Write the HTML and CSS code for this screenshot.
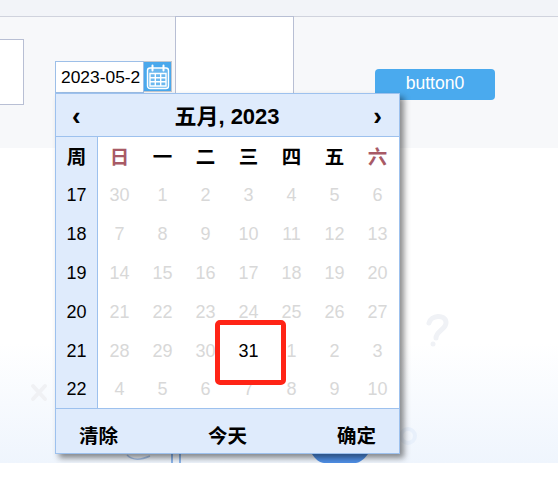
FILE: index.html
```html
<!DOCTYPE html>
<html lang="zh-CN">
<head>
  <meta charset="UTF-8" />
  <meta name="viewport" content="width=device-width, initial-scale=1" />
  <title>日期选择</title>
  <link rel="stylesheet" href="styles.css">
</head>
<body>
  <div class="pagina">
    <div class="barra"></div>
    <div class="panel">
      <div class="caja-izq"></div>
      <div class="fecha">
        <div class="fecha-texto">2023-05-2</div>
        <div class="fecha-icono">
          <svg width="24" height="26" viewBox="0 0 24 26" fill="none" stroke="#fff" stroke-width="1.4">
            <rect x="1.5" y="4" width="21" height="20.5" rx="2.5" fill="#a9d6f7" fill-opacity="0.35" />
            <path d="M6.5 1.5v5M17.5 1.5v5" stroke-width="2" stroke-linecap="round" />
            <path d="M4 9.5h16v12.5h-16zM9.3 9.5v12.5M14.7 9.5v12.5M4 13.7h16M4 17.8h16" />
          </svg>
        </div>
      </div>
      <div class="caja-centro"></div>
      <div class="boton">button0</div>
    </div>

    <div class="fondo">
      <svg class="dibujo" width="558" height="315" viewBox="0 148 558 315" fill="none">
        <path d="M33 386l12 13M45 386l-12 13" stroke="#f0f1f4" stroke-width="4" stroke-linecap="round" />
        <path d="M429 323c2-8 16-9 17-1 1 7-10 9-10 16" stroke="#f0f2f6" stroke-width="5" stroke-linecap="round" />
        <circle cx="433" cy="344" r="2.5" fill="#f0f2f6" />
        <circle cx="408" cy="436" r="7" stroke="#e8f0fb" stroke-width="4" />
        <path d="M127 455c6 6 14 5 23 1" stroke="#a9c4ec" stroke-width="1.5" />
        <path d="M172 452v11M180 452v11" stroke="#8db5ea" stroke-width="2" />
        <path d="M312 454h56c-4 6-10 9-12 9h-32c-4 0-9-4-12-9z" fill="#4f8fe6" />
      </svg>
    </div>

    <div class="calendario">
      <div class="cal-cabecera">
        <span class="flecha">‹</span>
        <span>五月, 2023</span>
        <span class="flecha">›</span>
      </div>
      <div class="cal-cuerpo">
        <div class="semanas">
          <div class="celda negrita">周</div>
          <div class="celda">17</div>
          <div class="celda">18</div>
          <div class="celda">19</div>
          <div class="celda">20</div>
          <div class="celda">21</div>
          <div class="celda">22</div>
        </div>
        <div class="dias">
          <div class="celda negrita finde">日</div>
          <div class="celda negrita">一</div>
          <div class="celda negrita">二</div>
          <div class="celda negrita">三</div>
          <div class="celda negrita">四</div>
          <div class="celda negrita">五</div>
          <div class="celda negrita finde">六</div>

          <div class="celda gris">30</div>
          <div class="celda gris">1</div>
          <div class="celda gris">2</div>
          <div class="celda gris">3</div>
          <div class="celda gris">4</div>
          <div class="celda gris">5</div>
          <div class="celda gris">6</div>

          <div class="celda gris">7</div>
          <div class="celda gris">8</div>
          <div class="celda gris">9</div>
          <div class="celda gris">10</div>
          <div class="celda gris">11</div>
          <div class="celda gris">12</div>
          <div class="celda gris">13</div>

          <div class="celda gris">14</div>
          <div class="celda gris">15</div>
          <div class="celda gris">16</div>
          <div class="celda gris">17</div>
          <div class="celda gris">18</div>
          <div class="celda gris">19</div>
          <div class="celda gris">20</div>

          <div class="celda gris">21</div>
          <div class="celda gris">22</div>
          <div class="celda gris">23</div>
          <div class="celda gris">24</div>
          <div class="celda gris">25</div>
          <div class="celda gris">26</div>
          <div class="celda gris">27</div>

          <div class="celda gris">28</div>
          <div class="celda gris">29</div>
          <div class="celda gris">30</div>
          <div class="celda marcada">31</div>
          <div class="celda gris">1</div>
          <div class="celda gris">2</div>
          <div class="celda gris">3</div>

          <div class="celda gris">4</div>
          <div class="celda gris">5</div>
          <div class="celda gris">6</div>
          <div class="celda gris">7</div>
          <div class="celda gris">8</div>
          <div class="celda gris">9</div>
          <div class="celda gris">10</div>
        </div>
      </div>
      <div class="cal-pie">
        <span>清除</span>
        <span>今天</span>
        <span>确定</span>
      </div>
    </div>
  </div>
</body>
</html>
```

FILE: styles.css
```css
* {
  margin: 0;
  padding: 0;
  box-sizing: border-box;
}
body {
  background: #fff;
  font-family: "Liberation Sans", "Noto Sans CJK SC", sans-serif;
  overflow: hidden;
}
.pagina {
  position: relative;
  width: 558px;
  height: 463px;
  overflow: hidden;
  display: flex;
  flex-direction: column;
}
.barra {
  height: 17px;
  flex: none;
  background: #f2f4f8;
  border-bottom: 1px solid #d0d3dd;
}
.panel {
  height: 131px;
  flex: none;
  display: flex;
  align-items: flex-start;
  background: #f7f8fa;
}
.caja-izq {
  width: 24px;
  height: 66px;
  margin-top: 22px;
  background: #fff;
  border: 1px solid #b8bfd4;
  border-left: none;
}
.fecha {
  display: flex;
  margin-top: 44px;
  margin-left: 31px;
}
.fecha-texto {
  width: 89px;
  height: 32px;
  padding-left: 5px;
  line-height: 30px;
  font-size: 17.4px;
  color: #000;
  background: #fff;
  border: 1px solid #9dbfe8;
  white-space: nowrap;
  overflow: hidden;
}
.fecha-icono {
  width: 28px;
  height: 31px;
  display: flex;
  align-items: center;
  justify-content: center;
  background: #4aa8ec;
  border: 1px solid #c4c8d0;
  border-left: none;
}
.caja-centro {
  width: 119px;
  height: 100px;
  margin-left: 3px;
  margin-top: -1px;
  background: #fff;
  border: 1px solid #b8bfd4;
  border-bottom: none;
}
.boton {
  width: 120px;
  height: 31px;
  margin-top: 52px;
  margin-left: 81px;
  line-height: 29px;
  text-align: center;
  font-size: 17.6px;
  color: #fff;
  background: #4aaaee;
  border-radius: 4px;
}
.fondo {
  flex: 1;
  position: relative;
  background: linear-gradient(180deg, #fff 0%, #fff 62%, #eff5fd 100%);
}
.dibujo {
  position: absolute;
  top: 0;
  left: 0;
}
.calendario {
  position: absolute;
  top: 93px;
  left: 55px;
  width: 345px;
  height: 361px;
  background: #fff;
  border: 1px solid #9dc1ee;
  box-shadow: 4px 4px 6px rgba(0, 0, 0, 0.45);
}
.cal-cabecera {
  height: 43px;
  display: flex;
  align-items: center;
  justify-content: space-between;
  padding: 0 17px 2px 16px;
  background: #dfebfc;
  border-bottom: 1px solid #9dc1ee;
  font-size: 22px;
  font-weight: bold;
  color: #000;
}
.flecha {
  font-size: 26px;
  line-height: 26px;
  padding-top: 3px;
}
.cal-cuerpo {
  height: 271px;
  display: flex;
}
.semanas {
  width: 42px;
  display: grid;
  grid-template-rows: 38px repeat(5, 39px) 38px;
  background: #dfebfc;
  border-right: 1px solid #9dc1ee;
}
.dias {
  flex: 1;
  display: grid;
  grid-template-columns: repeat(7, 43px);
  grid-template-rows: 38px repeat(5, 39px) 38px;
}
.celda {
  display: flex;
  align-items: center;
  justify-content: center;
  padding-top: 1px;
  font-size: 18px;
  color: #000;
}
.negrita {
  font-size: 19.5px;
  font-weight: bold;
  padding-top: 0;
  padding-bottom: 2px;
}
.finde {
  color: #a85a66;
}
.gris {
  color: #d8d8d8;
}
.marcada {
  position: relative;
}
.marcada::after {
  content: "";
  box-sizing: border-box;
  position: absolute;
  top: -11px;
  left: -12px;
  width: 71px;
  height: 65px;
  border: 5px solid #ff2416;
  border-radius: 5px;
}
.cal-pie {
  height: 45px;
  display: flex;
  align-items: center;
  justify-content: space-between;
  padding: 6px 23px 0;
  background: #dfebfc;
  border-top: 1px solid #9dc1ee;
  font-size: 19.5px;
  font-weight: bold;
  color: #000;
}
```
